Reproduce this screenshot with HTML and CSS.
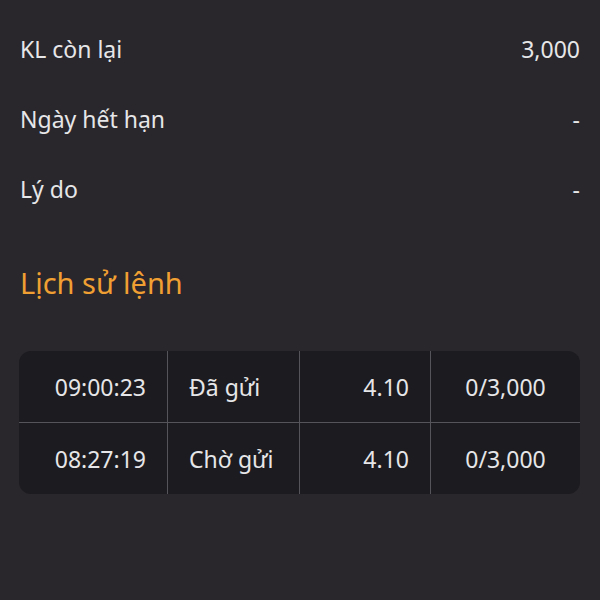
FILE: index.html
```html
<!DOCTYPE html>
<html lang="vi">
<head>
  <meta charset="UTF-8" />
  <meta name="viewport" content="width=device-width, initial-scale=1.0"/>
  <title>Chi tiết lệnh</title>
  <link rel="stylesheet" href="styles.css">
</head>
<body>
  <div class="container">
    <div class="info-row">
      <span class="label">KL còn lại</span>
      <span class="value">3,000</span>
    </div>
    <div class="info-row">
      <span class="label">Ngày hết hạn</span>
      <span class="value">-</span>
    </div>
    <div class="info-row">
      <span class="label">Lý do</span>
      <span class="value">-</span>
    </div>

    <h2 class="section-title">Lịch sử lệnh</h2>

    <table class="history">
      <tr>
        <td class="col-time">09:00:23</td>
        <td class="col-status">Đã gửi</td>
        <td class="col-price">4.10</td>
        <td class="col-qty">0/3,000</td>
      </tr>
      <tr>
        <td class="col-time">08:27:19</td>
        <td class="col-status">Chờ gửi</td>
        <td class="col-price">4.10</td>
        <td class="col-qty">0/3,000</td>
      </tr>
    </table>
  </div>
</body>
</html>
```

FILE: styles.css
```css
html, body {
  height: 100%;
}

body {
  font-family: 'Noto Sans', 'Open Sans', sans-serif;
  background: #29262c;
  color: #e6e6e8;
  margin: 0;
}

.container {
  padding: 14px 20px 0 20px;
}

.info-row {
  display: flex;
  justify-content: space-between;
  align-items: center;
  height: 70px;
  font-size: 23px;
}

.section-title {
  margin: 39px 0 0 0;
  font-size: 29px;
  font-weight: normal;
  color: #f0a032;
  line-height: 40px;
}

.history {
  width: 561px;
  margin: 48px 0 0 -1px;
  border-collapse: separate;
  border-spacing: 0;
  background: #1c1b1f;
  border-radius: 12px;
  font-size: 23px;
  overflow: hidden;
}

.history td {
  height: 71px;
  padding: 0 21px;
  border-right: 1px solid #55545a;
  box-sizing: border-box;
}

.history td:last-child {
  border-right: none;
}

.history tr:first-child td {
  height: 72px;
  border-bottom: 1px solid #55545a;
}

.col-time {
  width: 149px;
  text-align: right;
}

.col-status {
  width: 132px;
  text-align: left;
  padding-left: 20px;
}

.col-price {
  width: 131px;
  text-align: right;
}

.col-qty {
  text-align: center;
}
```
